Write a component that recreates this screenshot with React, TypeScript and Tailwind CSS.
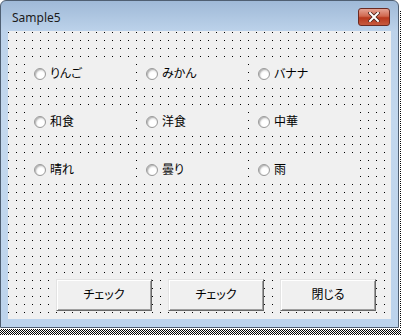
import React from 'react';

const rows = [
  ['りんご', 'みかん', 'バナナ'],
  ['和食', '洋食', '中華'],
  ['晴れ', '曇り', '雨'],
];

const buttons = ['チェック', 'チェック', '閉じる'];

function Radio({ label }: { label: string }) {
  return (
    <div className="w-[108px] h-[27px] bg-[#f0f0f0] flex items-center pl-[7px]">
      <span className="w-[12px] h-[12px] rounded-full border border-[#9a9a9a] bg-[radial-gradient(circle_at_60%_65%,#ffffff_35%,#dcdcdc_75%)] shadow-[inset_1px_1px_1px_#b8b8b8]" />
      <span className="ml-[4px] text-[12px] leading-none text-black [font-feature-settings:'palt']">{label}</span>
    </div>
  );
}

function Button({ label }: { label: string }) {
  return (
    <div className="w-[96px] h-[32px] bg-[#f0f0f0] border-t border-l border-[#e3e3e3] border-r border-b border-r-[#696969] border-b-[#696969] shadow-[inset_1px_1px_0_#ffffff,inset_-1px_-1px_0_#a0a0a0] flex items-center justify-center">
      <span className="text-[12px] leading-none text-black [font-feature-settings:'palt']">{label}</span>
    </div>
  );
}

export default function App() {
  return (
    <div className="w-[401px] h-[335px] bg-white overflow-hidden font-['Noto_Sans','Noto_Sans_CJK_JP',sans-serif]">
      <div className="flex">
        {/* Window */}
        <div className="w-[399px] h-[328px] border border-[#4f5f72] rounded-t-[6px] bg-[linear-gradient(to_bottom,#9fb9d7_0px,#bcd2ea_30px,#c3d8ee_120px,#bcd3ec_100%)] flex flex-col overflow-hidden">
          {/* Title bar */}
          <div className="h-[30px] flex items-center pl-[11px] pr-[8px] shrink-0">
            <span className="text-[12px] text-[#1b1b1b] pt-[3px] font-['Noto_Sans',sans-serif]">Sample5</span>
            <div className="ml-auto mt-[2px] w-[32px] h-[18px] rounded-[3px] border border-[#6b2a22] bg-[linear-gradient(to_bottom,#e5a394_0%,#d0684f_45%,#b8381d_55%,#c75a3e_100%)] flex items-center justify-center">
              <svg width="12" height="10" viewBox="0 0 12 10">
                <path d="M2 1 L10 9 M10 1 L2 9" stroke="#4a2018" strokeWidth="3.6" strokeLinecap="square" />
                <path d="M2 1 L10 9 M10 1 L2 9" stroke="#ffffff" strokeWidth="2" strokeLinecap="square" />
              </svg>
            </div>
          </div>

          {/* Client area, dotted design grid (8px) */}
          <div className="mx-[7px] h-[288px] [background:linear-gradient(90deg,transparent_1px,#f0f0f0_1px)_0_1px/8px_8px,linear-gradient(#000_1px,transparent_1px)_0_1px/8px_8px,#f0f0f0] flex flex-col">
            <div className="pt-[29px] pl-[19px] flex flex-col gap-[21px]">
              {rows.map((row, i) => (
                <div key={i} className="flex gap-[4px]">
                  {row.map((label) => (
                    <Radio key={label} label={label} />
                  ))}
                </div>
              ))}
            </div>

            <div className="mt-auto mb-[8px] pl-[48px] flex gap-[16px]">
              {buttons.map((b, i) => (
                <Button key={i} label={b} />
              ))}
            </div>
          </div>
        </div>

        {/* selection edge, right */}
        <div className="ml-px mt-[10px] w-[1px] h-[318px] bg-[conic-gradient(#000_25%,#fff_0_50%,#000_0_75%,#fff_0)] bg-[length:2px_2px]" />
      </div>

      {/* selection edge, bottom */}
      <div className="mt-[1px] h-[6px] bg-[conic-gradient(#000_25%,#fff_0_50%,#000_0_75%,#fff_0)] bg-[length:2px_2px]" />
    </div>
  );
}
